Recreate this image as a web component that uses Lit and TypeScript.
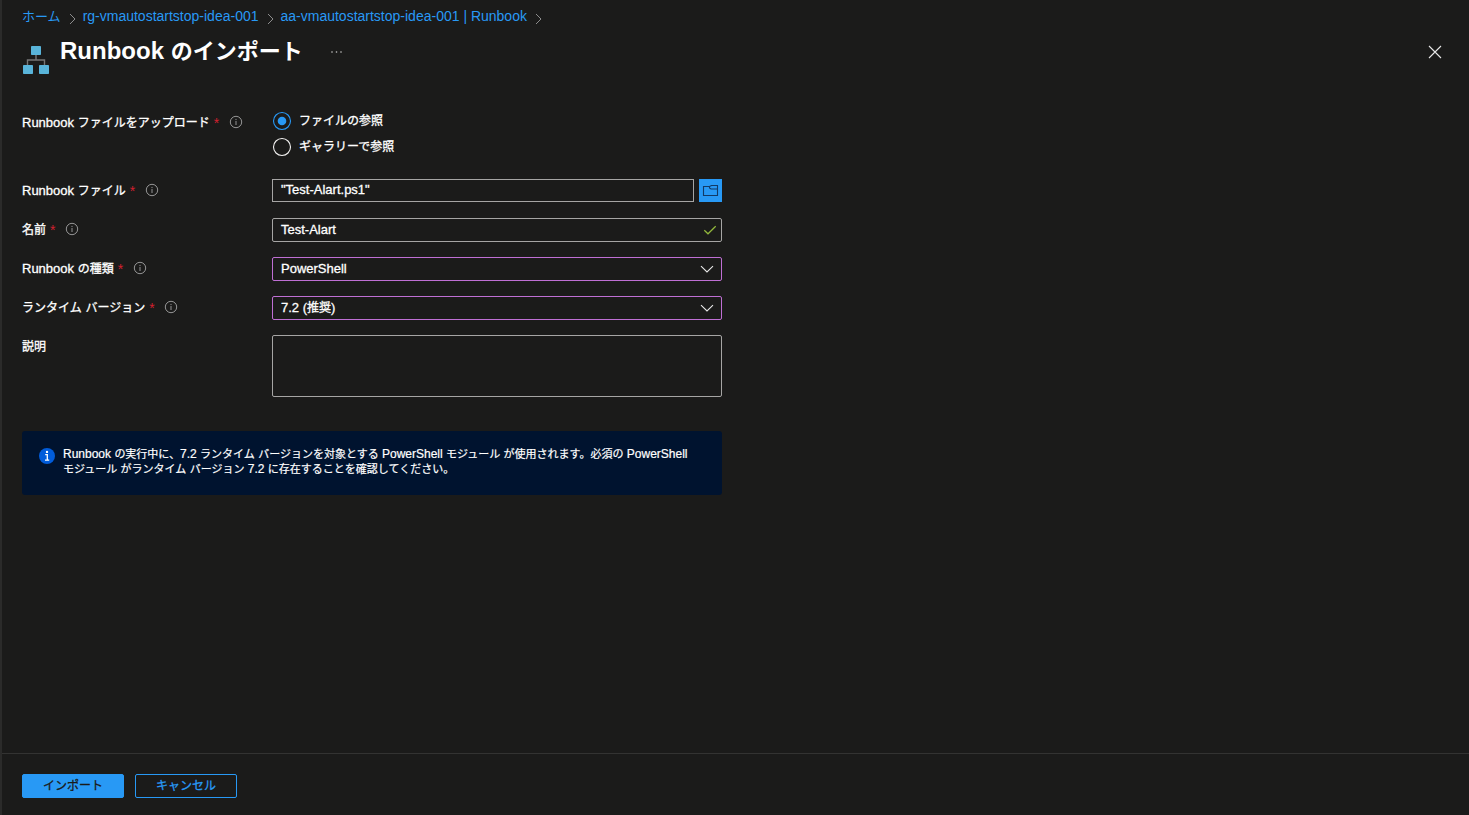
import { LitElement, html, css, svg, nothing } from "lit";
import { customElement, property } from "lit/decorators.js";

/** Splits text into Latin and Japanese runs so each can have its own optical size. */
const mixed = (text: string) =>
  text
    .split(/([\u3000-\u30ff\u4e00-\u9fff\uff00-\uffef]+)/)
    .filter((run) => run !== "")
    .map((run) =>
      /[\u3000-\u9fff]/.test(run) ? html`<span class="ja">${run}</span>` : run
    );

const jaStyles = css`
  .ja {
    font-family: "Noto Sans CJK JP", sans-serif;
    font-size: var(--ja-size, 12px);
    line-height: 1;
  }
`;

const chevronDown = svg`<path d="M1 1.2 7 7 13 1.2" fill="none" stroke="#e8e8e8" stroke-width="1.1"/>`;

@customElement("form-label")
class FormLabel extends LitElement {
  @property() text = "";
  @property({ type: Boolean }) required = false;

  static styles = [
    jaStyles,
    css`
      :host {
        display: flex;
        align-items: flex-start;
        height: 24px;
        line-height: 24px;
        white-space: pre;
      }
      .label {
        -webkit-text-stroke: 0.3px #fff;
      }
      .star {
        color: #d3202f;
        font-size: 14px;
        margin-left: 4px;
        width: 6px;
      }
      .info {
        margin: 4px 0 0 9px;
        display: block;
      }
    `,
  ];

  render() {
    return html`<span class="label">${mixed(this.text)}</span>${this.required
        ? html`<span class="star">*</span>
            <svg class="info" width="14" height="14" viewBox="0 0 14 14">
              <circle cx="7" cy="7" r="5.7" fill="none" stroke="#a3a3a3" stroke-width=".9" />
              <path d="M7 6v4M7 3.9v1.2" stroke="#a3a3a3" stroke-width=".9" />
            </svg>`
        : nothing}`;
  }
}

@customElement("app-root")
class AppRoot extends LitElement {
  static styles = [
    jaStyles,
    css`
      :host {
        display: flex;
        flex-direction: column;
        box-sizing: border-box;
        height: 100vh;
        background: #1b1b1a;
        border-left: 2px solid #2b2b2a;
        color: #fff;
        font: 13px "Liberation Sans", "Noto Sans CJK JP", sans-serif;
        overflow: hidden;
      }
      svg {
        display: block;
        flex: none;
      }
      .crumbs {
        display: flex;
        height: 32px;
        padding-left: 20px;
        line-height: 32px;
        font-size: 14px;
        color: #2899f5;
        white-space: nowrap;
        --ja-size: 13px;
      }
      .crumbs svg {
        margin: 13px 7px 0 8px;
      }
      .header {
        display: flex;
        height: 68px;
        padding: 0 27px 0 20px;
      }
      .header h1 {
        margin: 0 0 0 10px;
        width: 269px;
        font-size: 24px;
        line-height: 38px;
        white-space: nowrap;
        --ja-size: 22px;
      }
      .logo {
        margin-top: 13px;
      }
      .more {
        margin-top: 18px;
      }
      .close {
        margin: 13px 0 0 auto;
      }
      .form {
        display: grid;
        grid-template-columns: 250px 450px;
        row-gap: 15px;
        padding: 11px 0 0 20px;
      }
      .radios {
        display: flex;
        flex-direction: column;
        gap: 6px;
        height: 53px;
      }
      .radio {
        display: flex;
        align-items: center;
        height: 20px;
        line-height: 20px;
        gap: 7px;
        -webkit-text-stroke: 0.3px #fff;
      }
      .file {
        display: flex;
        gap: 5px;
      }
      .field {
        display: flex;
        justify-content: space-between;
        flex: 1;
        box-sizing: border-box;
        height: 24px;
        border: 1px solid #a6a5a4;
        border-radius: 2px;
        padding: 0 4px 0 8px;
        line-height: 22px;
        -webkit-text-stroke: 0.3px #fff;
      }
      .file .field {
        height: 23px;
        border-radius: 0;
        line-height: 20px;
      }
      .select {
        border-color: #bf6fd4;
        padding-right: 7px;
      }
      .select svg {
        margin-top: 7px;
      }
      .tick {
        margin-top: 5px;
      }
      .browse {
        display: flex;
        align-items: center;
        justify-content: center;
        width: 23px;
        height: 23px;
        background: #2899f5;
      }
      .area {
        height: 62px;
      }
      .notice {
        display: flex;
        box-sizing: border-box;
        width: 700px;
        height: 64px;
        margin: 34px 0 0 20px;
        padding: 16px;
        gap: 7px;
        border-radius: 3px;
        background: #00132f;
        font-size: 12px;
        line-height: 15px;
        white-space: nowrap;
        --ja-size: 11px;
        -webkit-text-stroke: 0.2px #fff;
      }
      .footer {
        display: flex;
        gap: 11px;
        box-sizing: border-box;
        height: 62px;
        margin-top: auto;
        padding: 20px 0 0 20px;
        border-top: 1px solid #333332;
      }
      .button {
        box-sizing: border-box;
        width: 102px;
        height: 24px;
        border: 1px solid #2899f5;
        border-radius: 2px;
        text-align: center;
        line-height: 21px;
        color: #2899f5;
        -webkit-text-stroke: 0.3px currentColor;
      }
      .primary {
        background: #2899f5;
        color: #1b1a19;
      }
    `,
  ];

  private crumb(text: string) {
    return html`<span>${mixed(text)}</span>
      <svg width="7" height="12" viewBox="0 0 7 12">
        <path d="M1 1 6 6 1 11" fill="none" stroke="#8c8c8c" stroke-width="1" />
      </svg>`;
  }

  private radio(text: string, on: boolean) {
    return html`<div class="radio">
      <svg width="20" height="20" viewBox="0 0 20 20">
        <circle cx="10" cy="10" r="8.5" fill="none" stroke=${on ? "#2899f5" : "#f3f2f1"} stroke-width="1.1" />
        ${on ? svg`<circle cx="10" cy="10" r="4.3" fill="#2899f5"/>` : nothing}
      </svg>
      <span>${mixed(text)}</span>
    </div>`;
  }

  private select(text: string) {
    return html`<div class="field select">
      <span>${mixed(text)}</span>
      <svg width="14" height="8" viewBox="0 0 14 8">${chevronDown}</svg>
    </div>`;
  }

  render() {
    return html`
      <nav class="crumbs">
        ${["ホーム", "rg-vmautostartstop-idea-001", "aa-vmautostartstop-idea-001 | Runbook"].map((t) => this.crumb(t))}
      </nav>
      <header class="header">
        <svg class="logo" width="28" height="30" viewBox="0 0 28 30">
          <path d="M14 10v5M5.5 20v-5h17v5" fill="none" stroke="#767676" stroke-width="1.4" />
          <g fill="#59b4d9">
            <rect x="9" y="1" width="10" height="9" rx=".8" />
            <rect x="1" y="20" width="10" height="9" rx=".8" />
            <rect x="17" y="20" width="10" height="9" rx=".8" />
          </g>
        </svg>
        <h1>${mixed("Runbook のインポート")}</h1>
        <svg class="more" width="14" height="4" viewBox="0 0 14 4">
          <g fill="#c8c8c8">
            <circle cx="3" cy="2" r=".8" /><circle cx="7.5" cy="2" r=".8" /><circle cx="12" cy="2" r=".8" />
          </g>
        </svg>
        <svg class="close" width="14" height="14" viewBox="0 0 14 14">
          <path d="M1 1 13 13M13 1 1 13" stroke="#e8e8e8" stroke-width="1.1" />
        </svg>
      </header>
      <main class="form">
        <form-label text="Runbook ファイルをアップロード" required></form-label>
        <div class="radios">
          ${this.radio("ファイルの参照", true)} ${this.radio("ギャラリーで参照", false)}
        </div>
        <form-label text="Runbook ファイル" required></form-label>
        <div class="file">
          <div class="field"><span>"Test-Alart.ps1"</span></div>
          <div class="browse">
            <svg width="17" height="13" viewBox="0 0 17 13">
              <path d="M1.5 2.5H7.5L9.5 1.5H15.5V11.5H1.5ZM7.5 2.5V4L9 5H15.5" fill="none" stroke="#123a66" stroke-width="1.1" />
            </svg>
          </div>
        </div>
        <form-label text="名前" required></form-label>
        <div class="field">
          <span>Test-Alart</span>
          <svg class="tick" width="14" height="12" viewBox="0 0 14 12">
            <path d="M1.3 6.2 5 9.8 12.7 2.2" fill="none" stroke="#92b83c" stroke-width="1.2" />
          </svg>
        </div>
        <form-label text="Runbook の種類" required></form-label>
        ${this.select("PowerShell")}
        <form-label text="ランタイム バージョン" required></form-label>
        ${this.select("7.2 (推奨)")}
        <form-label text="説明"></form-label>
        <div class="field area"></div>
      </main>
      <section class="notice">
        <svg width="18" height="18" viewBox="0 0 18 18">
          <circle cx="9" cy="9" r="8" fill="#015cda" />
          <circle cx="9" cy="4.9" r="1.2" fill="#fff" />
          <path d="M7.2 7.6H9.3V13M7 13.2H11.2" fill="none" stroke="#fff" stroke-width="1.3" />
        </svg>
        <div>
          <div>${mixed("Runbook の実行中に、7.2 ランタイム バージョンを対象とする PowerShell モジュール が使用されます。必須の PowerShell")}</div>
          <div>${mixed("モジュール がランタイム バージョン 7.2 に存在することを確認してください。")}</div>
        </div>
      </section>
      <footer class="footer">
        <div class="button primary">${mixed("インポート")}</div>
        <div class="button">${mixed("キャンセル")}</div>
      </footer>
    `;
  }
}
